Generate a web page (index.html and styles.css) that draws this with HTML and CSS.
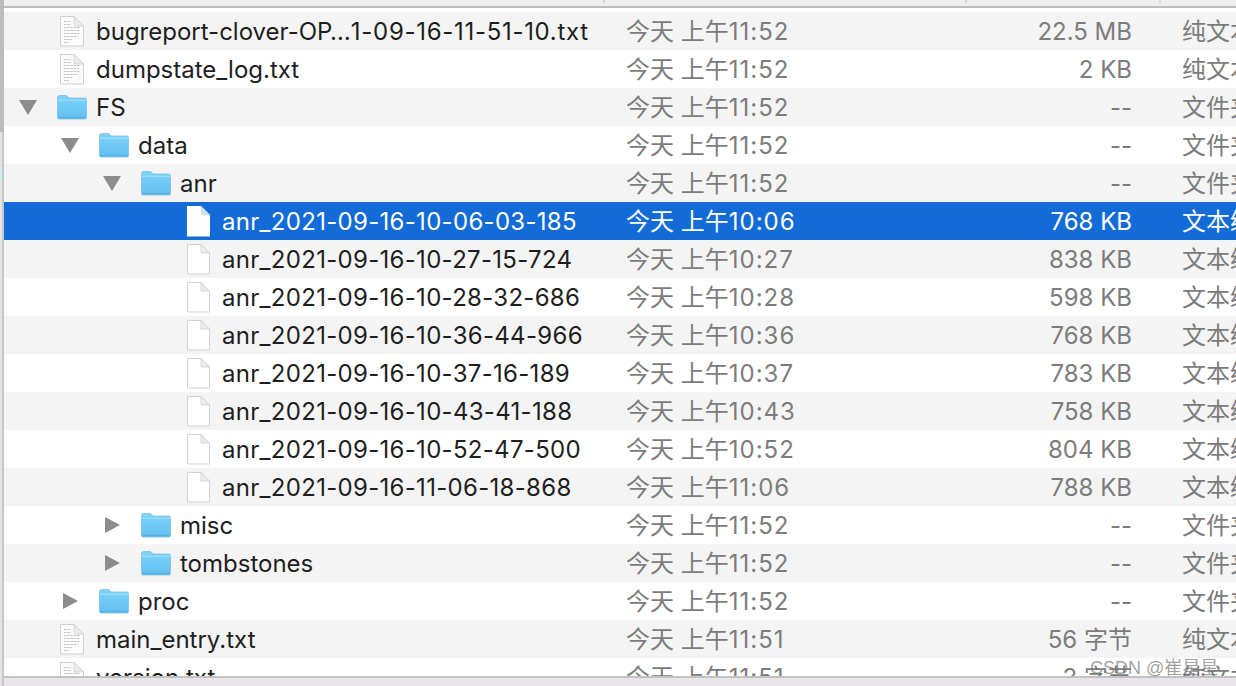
FILE: index.html
```html
<!DOCTYPE html>
<html lang="zh">
<head>
<meta charset="utf-8">
<title>Finder</title>
<link rel="stylesheet" href="styles.css">
</head>
<body>
<svg class="defs" width="0" height="0" aria-hidden="true">
  <defs>
    <linearGradient id="fold" x1="0" y1="0" x2="0" y2="1"><stop offset="0" stop-color="#7dd3fb"/><stop offset="1" stop-color="#62bff2"/></linearGradient>
    <symbol id="folder" viewBox="0 0 30 30">
      <path d="M0.5 5.5 Q0.5 3.5 2.5 3.5 H9 Q10 3.5 10.8 4.6 L12 6 H28 Q29.5 6 29.5 7.5 V25.5 Q29.5 27 28 27 H2 Q0.5 27 0.5 25.5 Z" fill="url(#fold)" stroke="#7fbfe4" stroke-width="0.8"/>
      <path d="M0.6 8.2 H29.4" stroke="#a6e2fd" stroke-width="1"/>
      <path d="M1 25.6 H29" stroke="#5aaedd" stroke-width="1.4"/>
    </symbol>
    <symbol id="blank" viewBox="0 0 30 32">
      <path d="M4.5 1.5 H18 L26.5 10 V31 H4.5 Z" fill="#fff" stroke="#d2d2d2" stroke-width="1"/>
      <path d="M18 1.5 V10 H26.5 Z" fill="#ececec" stroke="#d2d2d2" stroke-width="0.8"/>
    </symbol>
    <symbol id="blanksel" viewBox="0 0 30 32">
      <path d="M4 1 H18 L27 10 V31.5 H4 Z" fill="#fff"/>
      <path d="M18 1 V10 H27 Z" fill="#cfe0f5"/>
    </symbol>
    <symbol id="text" viewBox="0 0 30 32">
      <path d="M3.5 1.5 H17 L26.5 11 V31 H3.5 Z" fill="#fbfbfb" stroke="#cfcfcf" stroke-width="1"/>
      <path d="M17 1.5 V11 H26.5 Z" fill="#ececec" stroke="#cfcfcf" stroke-width="0.8"/>
      <path d="M7 6.5 H14 M7 9.5 H14 M7 12.5 H23 M7 15.5 H22 M7 18.5 H23 M7 21.5 H21 M7 24.5 H15 M7 27.5 H12" stroke="#b8b8b8" stroke-width="0.8" stroke-dasharray="2.5 0.7"/>
    </symbol>
  </defs>
</svg>
<div class="edge-top"></div>
<div class="edge-tint"></div>
<main class="window">
  <div class="header">
    <span class="hcell hcell-name"></span>
    <span class="hcell hcell-date"></span>
    <span class="hcell hcell-size"></span>
  </div>
  <div class="list">
    <div class="row"><div class="name l0"><span class="twist"></span><svg class="icon"><use href="#text"/></svg><span class="label">bugreport-clover-OP…<span class="tail">1-09-16-11-51-10.txt</span></span></div><div class="date">今天 上午<span class="t">11:52</span></div><div class="size">22.5 MB</div><div class="kind">纯文本文稿</div></div>
    <div class="row"><div class="name l0"><span class="twist"></span><svg class="icon"><use href="#text"/></svg><span class="label">dumpstate_log.txt</span></div><div class="date">今天 上午<span class="t">11:52</span></div><div class="size">2 KB</div><div class="kind">纯文本文稿</div></div>
    <div class="row"><div class="name l0"><span class="twist"><i class="tri down"></i></span><svg class="icon"><use href="#folder"/></svg><span class="label">FS</span></div><div class="date">今天 上午<span class="t">11:52</span></div><div class="size">--</div><div class="kind">文件夹</div></div>
    <div class="row"><div class="name l1"><span class="twist"><i class="tri down"></i></span><svg class="icon"><use href="#folder"/></svg><span class="label">data</span></div><div class="date">今天 上午<span class="t">11:52</span></div><div class="size">--</div><div class="kind">文件夹</div></div>
    <div class="row"><div class="name l2"><span class="twist"><i class="tri down"></i></span><svg class="icon"><use href="#folder"/></svg><span class="label">anr</span></div><div class="date">今天 上午<span class="t">11:52</span></div><div class="size">--</div><div class="kind">文件夹</div></div>
    <div class="row selected"><div class="name l3"><span class="twist"></span><svg class="icon"><use href="#blanksel"/></svg><span class="label num">anr_2021-09-16-10-06-03-185</span></div><div class="date">今天 上午<span class="t">10:06</span></div><div class="size">768 KB</div><div class="kind">文本编辑</div></div>
    <div class="row"><div class="name l3"><span class="twist"></span><svg class="icon"><use href="#blank"/></svg><span class="label num">anr_2021-09-16-10-27-15-724</span></div><div class="date">今天 上午<span class="t">10:27</span></div><div class="size">838 KB</div><div class="kind">文本编辑</div></div>
    <div class="row"><div class="name l3"><span class="twist"></span><svg class="icon"><use href="#blank"/></svg><span class="label num">anr_2021-09-16-10-28-32-686</span></div><div class="date">今天 上午<span class="t">10:28</span></div><div class="size">598 KB</div><div class="kind">文本编辑</div></div>
    <div class="row"><div class="name l3"><span class="twist"></span><svg class="icon"><use href="#blank"/></svg><span class="label num">anr_2021-09-16-10-36-44-966</span></div><div class="date">今天 上午<span class="t">10:36</span></div><div class="size">768 KB</div><div class="kind">文本编辑</div></div>
    <div class="row"><div class="name l3"><span class="twist"></span><svg class="icon"><use href="#blank"/></svg><span class="label num">anr_2021-09-16-10-37-16-189</span></div><div class="date">今天 上午<span class="t">10:37</span></div><div class="size">783 KB</div><div class="kind">文本编辑</div></div>
    <div class="row"><div class="name l3"><span class="twist"></span><svg class="icon"><use href="#blank"/></svg><span class="label num">anr_2021-09-16-10-43-41-188</span></div><div class="date">今天 上午<span class="t">10:43</span></div><div class="size">758 KB</div><div class="kind">文本编辑</div></div>
    <div class="row"><div class="name l3"><span class="twist"></span><svg class="icon"><use href="#blank"/></svg><span class="label num">anr_2021-09-16-10-52-47-500</span></div><div class="date">今天 上午<span class="t">10:52</span></div><div class="size">804 KB</div><div class="kind">文本编辑</div></div>
    <div class="row"><div class="name l3"><span class="twist"></span><svg class="icon"><use href="#blank"/></svg><span class="label num">anr_2021-09-16-11-06-18-868</span></div><div class="date">今天 上午<span class="t">11:06</span></div><div class="size">788 KB</div><div class="kind">文本编辑</div></div>
    <div class="row"><div class="name l2"><span class="twist"><i class="tri right"></i></span><svg class="icon"><use href="#folder"/></svg><span class="label">misc</span></div><div class="date">今天 上午<span class="t">11:52</span></div><div class="size">--</div><div class="kind">文件夹</div></div>
    <div class="row"><div class="name l2"><span class="twist"><i class="tri right"></i></span><svg class="icon"><use href="#folder"/></svg><span class="label">tombstones</span></div><div class="date">今天 上午<span class="t">11:52</span></div><div class="size">--</div><div class="kind">文件夹</div></div>
    <div class="row"><div class="name l1"><span class="twist"><i class="tri right"></i></span><svg class="icon"><use href="#folder"/></svg><span class="label">proc</span></div><div class="date">今天 上午<span class="t">11:52</span></div><div class="size">--</div><div class="kind">文件夹</div></div>
    <div class="row"><div class="name l0"><span class="twist"></span><svg class="icon"><use href="#text"/></svg><span class="label">main_entry.txt</span></div><div class="date">今天 上午<span class="t">11:51</span></div><div class="size">56 字节</div><div class="kind">纯文本文稿</div></div>
    <div class="row"><div class="name l0"><span class="twist"></span><svg class="icon"><use href="#text"/></svg><span class="label">version.txt</span></div><div class="date">今天 上午<span class="t">11:51</span></div><div class="size">3 字节</div><div class="kind">纯文本文稿</div></div>
  </div>
  <div class="footer"></div>
  <div class="watermark">CSDN @崔星星</div>
</main>
</body>
</html>
```

FILE: styles.css
```css
* { box-sizing: border-box; }
html, body { margin: 0; padding: 0; height: 100%; overflow: hidden; background: #fff; }
body { position: relative; padding-left: 2px; background: #e4e4e4; font-family: "Inter", "Noto Sans CJK SC", sans-serif; font-size: 24px; }
.defs { position: absolute; }
.edge-top { position: absolute; left: 0; top: 0; width: 4px; height: 132px; background: #bcbcbc; z-index: 1; }
.edge-tint { position: absolute; left: 0; top: 168px; width: 2px; height: 12px; background: #c8f0f0; }
.window { position: relative; display: flex; flex-direction: column; height: 686px; width: 1234px; border-left: 2px solid #c8c8c8; }
.header { display: flex; align-items: flex-start; flex: none; height: 8px; background: #efefef; border-bottom: 2px solid #bdbdbd; }
.hcell { height: 3px; border-right: 2px solid #d6d6d6; }
.hcell-name { width: 601px; }
.hcell-date { width: 362px; }
.hcell-size { width: 194px; }
.list { flex: 1; min-height: 0; overflow: hidden; padding-top: 4px; background: #fff; }
.row { display: grid; grid-template-columns: 623px 300px 205px 1fr; grid-template-rows: 38px; align-items: start; height: 38px; line-height: 38px; white-space: nowrap; overflow: hidden; }
.row:nth-child(odd) { background: #f4f4f4; }
.row.selected { background: #126bd6; color: #fff; }
.name { display: flex; align-items: center; height: 38px; color: #1e1e1e; }
.label, .date, .size, .kind { padding-top: 1px; }
.label { height: 38px; }
.num { letter-spacing: 0.3px; }
.tail { letter-spacing: 0.7px; }
.t { letter-spacing: 1px; }
.l0 { padding-left: 15px; }
.l1 { padding-left: 57px; }
.l2 { padding-left: 99px; }
.l3 { padding-left: 141px; }
.twist { display: flex; align-items: center; flex: none; width: 38px; height: 24px; }
.tri { display: block; width: 0; height: 0; border-style: solid; border-color: transparent; }
.tri.down { border-width: 15px 9px 0 9px; border-top-color: #8c8c8c; }
.tri.right { margin-left: 2px; border-width: 8.5px 0 8.5px 15px; border-left-color: #8c8c8c; }
.icon { flex: none; width: 30px; height: 32px; margin-right: 9px; }
.date, .size, .kind { color: #7c7c7c; }
.date { margin-left: -1px; }
.size { text-align: right; }
.kind { padding-left: 50px; overflow: hidden; }
.selected .name, .selected .date, .selected .size, .selected .kind { color: #fff; }
.footer { flex: none; height: 10px; background: #e8e6e8; border-top: 2px solid #c3c1c3; }
.watermark { position: absolute; left: 1086px; top: 656px; font-family: "Liberation Sans", "Noto Sans CJK SC", sans-serif; font-size: 18px; line-height: 24px; color: rgba(120, 120, 120, 0.7); white-space: nowrap; }
```
